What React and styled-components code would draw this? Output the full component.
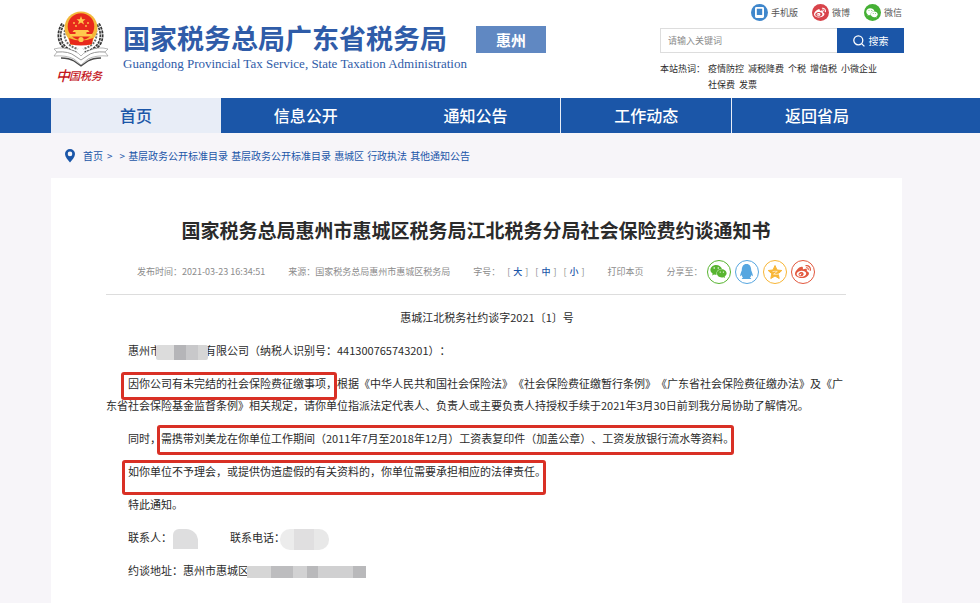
import React from 'react';
import styled, { createGlobalStyle } from 'styled-components';
import { FaQq, FaWeibo, FaWeixin } from 'react-icons/fa';

const colors = {
  blue: '#1b56a8',
  logoBlue: '#2f5ca8',
  badge: '#6088c2',
  pale: '#e8edf7',
  page: '#f7f5f9',
  white: '#ffffff',
  dark: '#2b2b2b',
  grey: '#8c8c8c',
  line: '#dddddd',
  mark: '#d93025',
  red: '#e8281c',
};

const GlobalStyle = createGlobalStyle`
  * {
    box-sizing: border-box;
  }

  body {
    margin: 0;
    background: ${colors.page};
    color: ${colors.dark};
    font-family: "Noto Sans CJK SC", sans-serif;
    font-size: 11px;
    line-height: 22px;
    text-spacing-trim: space-all;
  }

  a {
    color: inherit;
    text-decoration: none;
  }
`;

const Header = styled.header`
  display: flex;
  height: 98px;
  padding: 0 76px 0 51px;
  background: ${colors.white};
`;

const Brand = styled.a`
  display: flex;
  flex: none;
  color: ${colors.logoBlue};
`;

const Emblem = styled.svg`
  width: 60px;
  height: 80px;
  margin: 8px 12px 0 0;
`;

const BrandNames = styled.div`
  padding-top: 20px;
  white-space: nowrap;
`;

const BrandTitle = styled.div`
  font-size: 27px;
  font-weight: 700;
  line-height: 36px;
`;

const BrandSubtitle = styled.div`
  font-family: "Liberation Serif", serif;
  font-size: 13px;
  line-height: 16px;
`;

const City = styled.div`
  flex: none;
  width: 70px;
  height: 27px;
  margin: 26px 0 0 9px;
  background: ${colors.badge};
  color: ${colors.white};
  font-size: 15px;
  font-weight: 700;
  line-height: 27px;
  text-align: center;
`;

const Tools = styled.div`
  flex: none;
  width: 244px;
  margin-left: auto;
  padding-top: 4px;
  font-size: 9px;
`;

const Channels = styled.div`
  display: flex;
  justify-content: flex-end;
  gap: 14px;
  height: 24px;
  padding-right: 2px;
  line-height: 18px;
  color: #555555;
`;

const Channel = styled.a`
  display: flex;
  gap: 3px;
  height: 18px;
`;

const ChannelIcon = styled.span`
  display: flex;
  align-items: center;
  justify-content: center;
  width: 17px;
  height: 17px;
  border-radius: 50%;
  background: ${p => p.$color};
  color: ${colors.white};
`;

const Search = styled.form`
  display: flex;
  height: 25px;
`;

const SearchInput = styled.input`
  flex: 1;
  min-width: 0;
  padding: 0 7px;
  border: 1px solid ${colors.line};
  border-right: 0;
  border-radius: 0;
  background: ${colors.white};
  font: inherit;

  &::placeholder {
    color: ${colors.grey};
  }
`;

const SearchButton = styled.button`
  display: flex;
  align-items: center;
  justify-content: center;
  gap: 4px;
  width: 67px;
  padding: 0;
  border: 0;
  background: ${colors.blue};
  color: ${colors.white};
  font: inherit;
  font-size: 10px;
`;

const HotWords = styled.div`
  display: flex;
  gap: 3px;
  padding-top: 8px;
  line-height: 16px;
`;

const HotLabel = styled.span`
  flex: none;
`;

const HotList = styled.div`
  display: flex;
  flex-wrap: wrap;
  column-gap: 4px;
  padding-right: 20px;
`;

const Nav = styled.nav`
  display: flex;
  padding: 0 78px 0 51px;
  background: ${colors.blue};
`;

const NavLink = styled.a`
  flex: 1;
  border-left: ${p => (p.$divided ? `1px solid ${colors.pale}` : '0')};
  background: ${p => (p.$active ? colors.pale : 'transparent')};
  font-size: 16px;
  font-weight: 500;
  line-height: 35px;
  text-align: center;

  && {
    color: ${p => (p.$active ? colors.blue : colors.white)};
  }
`;

const Main = styled.main`
  padding: 0 78px 0 51px;
`;

const Crumbs = styled.nav`
  display: flex;
  align-items: center;
  height: 45px;
  padding-left: 14px;
  color: ${colors.blue};
  font-size: 10px;
`;

const Pin = styled.svg`
  width: 10px;
  height: 14px;
  margin-right: 8px;
`;

const CrumbArrow = styled.span`
  margin-left: 4px;
  margin-right: 3px;
`;

const CrumbList = styled.span`
  display: flex;
  gap: 3px;
`;

const Article = styled.article`
  min-height: calc(100vh - 178px);
  padding: 36px 56px 22px 55px;
  background: ${colors.white};
`;

const Title = styled.h1`
  margin: 0;
  font-size: 19px;
  font-weight: 700;
  line-height: 32px;
  text-align: center;
`;

const Meta = styled.div`
  display: flex;
  align-items: center;
  gap: 23px;
  height: 49px;
  padding: 3px 31px 0;
  border-bottom: 1px solid ${colors.line};
  color: ${colors.grey};
  font-size: 9px;
  white-space: nowrap;
`;

const Sizes = styled.span`
  display: flex;
  gap: 7px;
`;

const SizeButton = styled.button`
  padding: 0;
  border: 0;
  background: none;
  color: ${colors.grey};
  font: inherit;

  span {
    margin: 0 3px;
    color: ${colors.blue};
    font-weight: 500;
  }
`;

const PrintButton = styled.button`
  padding: 0;
  border: 0;
  background: none;
  color: inherit;
  font: inherit;
`;

const Share = styled.span`
  display: flex;
  align-items: center;
  gap: 4px;
`;

const ShareLink = styled.a`
  display: flex;
  align-items: center;
  justify-content: center;
  width: 24px;
  height: 24px;
  border: 1px solid ${p => p.$color};
  border-radius: 50%;

  && {
    color: ${p => p.$color};
  }
`;

const Body = styled.div`
  padding-top: 11px;
`;

const Paragraph = styled.p`
  margin: 0 0 11px;
  text-align: ${p => p.$align || 'left'};
  text-indent: 2em;
`;

const Marked = styled.span`
  position: relative;

  &::after {
    content: '';
    position: absolute;
    inset: ${p => p.$inset};
    border: 3px solid ${colors.mark};
    border-radius: 3px;
  }
`;

const Mosaic = styled.span`
  display: inline-block;
  width: ${p => p.$width}px;
  height: ${p => p.$height}px;
  margin: -4px ${p => p.$right || 0}px -4px ${p => p.$left || 0}px;
  border-radius: ${p => p.$radius || '0'};
  background: ${p => p.$fill};
  vertical-align: middle;
  position: relative;
`;

const navItems = ['首页', '信息公开', '通知公告', '工作动态', '返回省局'];
const hotWords = ['疫情防控', '减税降费', '个税', '增值税', '小微企业', '社保费', '发票'];
const crumbs = ['基层政务公开标准目录', '基层政务公开标准目录', '惠城区', '行政执法', '其他通知公告'];

const PhoneIcon = () => (
  <svg width="9" height="11" viewBox="0 0 10 12">
    <path fill="#fff" fillRule="evenodd" d="M1.5 0h7Q10 0 10 1.500v9Q10 12 8.500 12h-7Q0 12 0 10.500v-9Q0 0 1.500 0zM2 1.800v7h6v-7z" />
  </svg>
);

const SearchIcon = () => (
  <svg width="12" height="12" viewBox="0 0 12 12" fill="none" stroke="#fff" strokeWidth="1.300">
    <circle cx="5.300" cy="5.300" r="4.500" />
    <path d="M8.600 8.600 11.400 11.400" />
  </svg>
);

const StarIcon = () => (
  <svg width="16" height="16" viewBox="0 0 16 16">
    <path fill="currentColor" stroke="currentColor" strokeLinejoin="round" d="M8 1.500 10 6l4.800.5-3.600 3.200 1 4.800L8 12l-4.200 2.500 1-4.800L1.200 6.500 6 6z" />
    <path fill="none" stroke="#fff" strokeWidth=".6" d="M5.500 7.600q2.500-.6 4.800-.2L6.600 10.200q3 .5 5.400-.2" />
  </svg>
);

const BrandEmblem = () => (
  <Emblem viewBox="0 0 60 80" aria-hidden="true">
    <g fill="none" stroke="#343434" strokeWidth="4" strokeDasharray="2.800 .9">
      <path d="M12 16C5 27 8 41 25 45" />
      <path d="M47 16C54 27 51 41 34 45" />
    </g>
    <g fill="none" stroke="#e6e6e6" strokeWidth=".8">
      <path d="M12 16C5 27 8 41 25 45" />
      <path d="M47 16C54 27 51 41 34 45" />
    </g>
    <g fill="none" stroke="#6b6b6b" strokeWidth="2" strokeDasharray="2 1.200">
      <path d="M14 22C12 31 16 38 27 41" />
      <path d="M45 22C47 31 43 38 32 41" />
    </g>
    <path fill="#fff" stroke="#9a9a9a" strokeWidth=".7" d="M3 41q10-3 20 2 5 2 7 5 2-3 7-5 10-5 20-2l-3 3 3 4q-12-1-20 3l-7 6-7-6q-8-4-20-3l3-4z" />
    <path fill="none" stroke="#8b8b8b" strokeWidth=".9" d="M6 44q12-1 18 4l6 4 6-4q6-5 18-4" />
    <path fill="none" stroke="#4a4a4a" strokeWidth="1.400" d="M10 50q8 0 13 3l7 5 7-5q5-3 13-3" />
    <circle cx="30" cy="20" r="16.500" fill="#f4b83a" />
    <path fill="#f4b83a" d="M17 30h26l-3 7H20z" />
    <circle cx="30" cy="18.500" r="13.300" fill={colors.red} />
    <path fill={colors.red} d="M18 30q12 5 24 0l-1 6q-11 3-22 0z" />
    <path fill="#ffc94d" d="m30 8 1.200 3.200h3.300L32 13.200l1 3.200-3-2-3 2 1-3.200-2.500-2h3.300z" />
    <g fill="#ffc94d">
      <circle cx="23" cy="15" r=".9" />
      <circle cx="25" cy="18" r=".9" />
      <circle cx="35" cy="18" r=".9" />
      <circle cx="37" cy="15" r=".9" />
      <path d="M23 22h14l1.500 2h-17zM24.500 24h11v2h-11zM19 26h22v2.500H19z" />
      <circle cx="30" cy="31.500" r="2.600" />
    </g>
    <g fill="#c4161c" fontFamily="Noto Sans CJK SC, sans-serif" fontStyle="italic" fontWeight="500">
      <text x="5" y="73" fontSize="14">中</text>
      <text x="18" y="72" fontSize="11">国税务</text>
    </g>
  </Emblem>
);

const SiteHeader = () => (
  <Header>
    <Brand href="#home">
      <BrandEmblem />
      <BrandNames>
        <BrandTitle>国家税务总局广东省税务局</BrandTitle>
        <BrandSubtitle>Guangdong Provincial Tax Service, State Taxation Administration</BrandSubtitle>
      </BrandNames>
    </Brand>
    <City>惠州</City>
    <Tools>
      <Channels>
        <Channel href="#mobile"><ChannelIcon $color="#3f87cc"><PhoneIcon /></ChannelIcon>手机版</Channel>
        <Channel href="#weibo"><ChannelIcon $color="#d8434a"><FaWeibo size={12} /></ChannelIcon>微博</Channel>
        <Channel href="#wechat"><ChannelIcon $color="#45b035"><FaWeixin size={12} /></ChannelIcon>微信</Channel>
      </Channels>
      <Search onSubmit={e => e.preventDefault()}>
        <SearchInput type="text" placeholder="请输入关键词" aria-label="请输入关键词" />
        <SearchButton type="submit"><SearchIcon />搜索</SearchButton>
      </Search>
      <HotWords>
        <HotLabel>本站热词：</HotLabel>
        <HotList>
          {hotWords.map(word => <a key={word} href="#search">{word}</a>)}
        </HotList>
      </HotWords>
    </Tools>
  </Header>
);

const App = () => (
  <>
    <GlobalStyle />
    <SiteHeader />
    <Nav>
      {navItems.map((item, i) => (
        <NavLink key={item} href="#nav" $active={i === 0} $divided={i > 2}>{item}</NavLink>
      ))}
    </Nav>
    <Main>
      <Crumbs>
        <Pin viewBox="0 0 10 14">
          <path fill={colors.blue} fillRule="evenodd" d="M5 0a5 5 0 0 1 5 5c0 3-3 6-5 8.500C3 11 0 8 0 5a5 5 0 0 1 5-5zm0 2.600a2.300 2.300 0 1 0 0 4.600 2.300 2.300 0 0 0 0-4.600z" />
        </Pin>
        <a href="#home">首页</a>
        <CrumbArrow>&gt;</CrumbArrow>
        <CrumbArrow>&gt;</CrumbArrow>
        <CrumbList>
          {crumbs.map((crumb, i) => <a key={i} href="#list">{crumb}</a>)}
        </CrumbList>
      </Crumbs>
      <Article>
        <Title>国家税务总局惠州市惠城区税务局江北税务分局社会保险费约谈通知书</Title>
        <Meta>
          <span>发布时间：2021-03-23 16:34:51</span>
          <span>来源：国家税务总局惠州市惠城区税务局</span>
          <Sizes>
            字号：
            {['大', '中', '小'].map(size => (
              <SizeButton key={size} type="button">[<span>{size}</span>]</SizeButton>
            ))}
          </Sizes>
          <PrintButton type="button">打印本页</PrintButton>
          <Share>
            分享至：
            <ShareLink href="#wechat" aria-label="微信" $color="#58b530"><FaWeixin size={17} /></ShareLink>
            <ShareLink href="#qq" aria-label="QQ" $color="#56a6e0"><FaQq size={15} /></ShareLink>
            <ShareLink href="#qzone" aria-label="QQ空间" $color="#f8b636"><StarIcon /></ShareLink>
            <ShareLink href="#weibo" aria-label="微博" $color="#e2583e"><FaWeibo size={16} /></ShareLink>
          </Share>
        </Meta>
        <Body>
          <Paragraph $align="center">惠城江北税务社约谈字2021〔1〕号</Paragraph>
          <Paragraph>
            惠州市
            <Mosaic $width={52} $height={15} $left={-5} $right={-3} $radius="2px" $fill="linear-gradient(90deg, #dcdcdc 0 18px, #b5b5b8 18px 30px, #c8c8ca 30px 42px, #d6d6d6 42px)" />
            有限公司（纳税人识别号：441300765743201）：
          </Paragraph>
          <Paragraph>
            <Marked $inset="-3px 0 -9px -7px">因你公司有未完结的社会保险费征缴事项，</Marked>
            根据《中华人民共和国社会保险法》《社会保险费征缴暂行条例》《广东省社会保险费征缴办法》及《广东省社会保险基金监督条例》相关规定，请你单位指派法定代表人、负责人或主要负责人持授权手续于2021年3月30日前到我分局协助了解情况。
          </Paragraph>
          <Paragraph>
            同时，
            <Marked $inset="-5px 0 -9px -4px">需携带刘美龙在你单位工作期间（2011年7月至2018年12月）工资表复印件（加盖公章）、工资发放银行流水等资料。</Marked>
          </Paragraph>
          <Paragraph>
            <Marked $inset="-3px 0 -16px -6px">如你单位不予理会，或提供伪造虚假的有关资料的，你单位需要承担相应的法律责任。</Marked>
          </Paragraph>
          <Paragraph>特此通知。</Paragraph>
          <Paragraph>
            联系人：
            <Mosaic $width={25} $height={20} $left={1} $right={32} $radius="6px 12px 0 0" $fill="#dededf" />
            联系电话：
            <Mosaic $width={49} $height={21} $left={-5} $radius="10px" $fill="linear-gradient(90deg, #ececec 0 14px, #e0dfe0 14px 34px, #e8e8e8 34px)" />
          </Paragraph>
          <Paragraph>
            约谈地址：惠州市惠城区
            <Mosaic $width={119} $height={12} $left={-2} $fill="linear-gradient(90deg, #d6d6d6 0 24px, #bdbdbf 24px 46px, #d2d2d3 46px 60px, #b9b9bb 60px 71px, #d0d0d1 71px 106px, #b9b9bb 106px)" />
          </Paragraph>
        </Body>
      </Article>
    </Main>
  </>
);

export default App;
